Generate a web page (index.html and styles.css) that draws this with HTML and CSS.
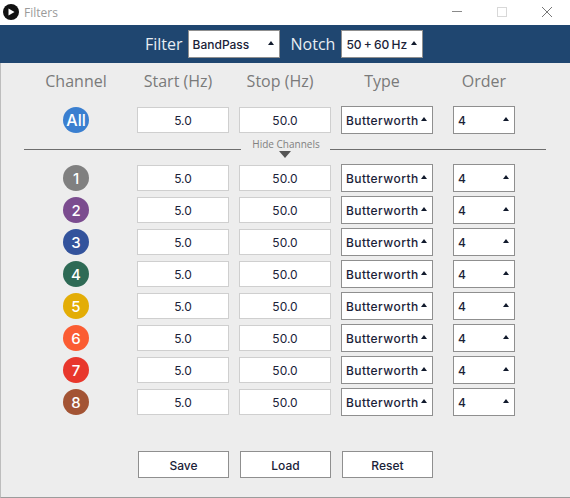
FILE: index.html
```html
<!DOCTYPE html>
<html lang="en">
<head>
    <meta charset="UTF-8">
    <title>Filters</title>
    <link rel="stylesheet" href="styles.css">
</head>
<body>
    <div class="titlebar">
        <svg class="app-icon" width="16" height="16" viewBox="0 0 16 16">
            <circle cx="8" cy="8" r="8" fill="#111"/>
            <path d="M5.5 4.5 L11.5 8 L5.5 11.5 Z" fill="#fff"/>
        </svg>
        <span class="title">Filters</span>
        <div class="win-buttons">
            <svg width="12" height="12" viewBox="0 0 12 12"><path d="M1 5.5 H11" stroke="#8a8a8a" fill="none"/></svg>
            <svg width="12" height="12" viewBox="0 0 12 12"><rect x="1.5" y="1.5" width="9" height="9" stroke="#d8d8d8" fill="none"/></svg>
            <svg width="12" height="12" viewBox="0 0 12 12"><path d="M1 1 L11 11 M11 1 L1 11" stroke="#777" fill="none"/></svg>
        </div>
    </div>

    <div class="topbar">
        <span class="top-label">Filter</span>
        <div class="select filter-select">BandPass<span class="caret"></span></div>
        <span class="top-label notch-label">Notch</span>
        <div class="select notch-select">50 + 60 Hz<span class="caret"></span></div>
    </div>

    <div class="content">
        <div class="row head">
            <div>Channel</div>
            <div>Start (Hz)</div>
            <div>Stop (Hz)</div>
            <div>Type</div>
            <div>Order</div>
        </div>

        <div class="row all-row">
            <div class="badge all">All</div>
            <div class="field">5.0</div>
            <div class="field">50.0</div>
            <div class="select">Butterworth<span class="caret"></span></div>
            <div class="select">4<span class="caret"></span></div>
        </div>

        <div class="divider">
            <div class="line"></div>
            <div class="toggle">
                <span class="toggle-text">Hide Channels</span>
                <span class="toggle-arrow"></span>
            </div>
            <div class="line"></div>
        </div>

        <div class="channels">
            <div class="row">
                <div class="badge c1">1</div>
                <div class="field">5.0</div>
                <div class="field">50.0</div>
                <div class="select">Butterworth<span class="caret"></span></div>
                <div class="select">4<span class="caret"></span></div>
            </div>
            <div class="row">
                <div class="badge c2">2</div>
                <div class="field">5.0</div>
                <div class="field">50.0</div>
                <div class="select">Butterworth<span class="caret"></span></div>
                <div class="select">4<span class="caret"></span></div>
            </div>
            <div class="row">
                <div class="badge c3">3</div>
                <div class="field">5.0</div>
                <div class="field">50.0</div>
                <div class="select">Butterworth<span class="caret"></span></div>
                <div class="select">4<span class="caret"></span></div>
            </div>
            <div class="row">
                <div class="badge c4">4</div>
                <div class="field">5.0</div>
                <div class="field">50.0</div>
                <div class="select">Butterworth<span class="caret"></span></div>
                <div class="select">4<span class="caret"></span></div>
            </div>
            <div class="row">
                <div class="badge c5">5</div>
                <div class="field">5.0</div>
                <div class="field">50.0</div>
                <div class="select">Butterworth<span class="caret"></span></div>
                <div class="select">4<span class="caret"></span></div>
            </div>
            <div class="row">
                <div class="badge c6">6</div>
                <div class="field">5.0</div>
                <div class="field">50.0</div>
                <div class="select">Butterworth<span class="caret"></span></div>
                <div class="select">4<span class="caret"></span></div>
            </div>
            <div class="row">
                <div class="badge c7">7</div>
                <div class="field">5.0</div>
                <div class="field">50.0</div>
                <div class="select">Butterworth<span class="caret"></span></div>
                <div class="select">4<span class="caret"></span></div>
            </div>
            <div class="row">
                <div class="badge c8">8</div>
                <div class="field">5.0</div>
                <div class="field">50.0</div>
                <div class="select">Butterworth<span class="caret"></span></div>
                <div class="select">4<span class="caret"></span></div>
            </div>
        </div>

        <div class="actions">
            <button class="btn">Save</button>
            <button class="btn">Load</button>
            <button class="btn">Reset</button>
        </div>
    </div>
</body>
</html>
```

FILE: styles.css
```css
* { box-sizing: border-box; }
html, body { margin: 0; padding: 0; }
body { width: 570px; height: 498px; overflow: hidden; background-color: #ededed; font-family: "Inter", "Open Sans", sans-serif; color: #1a2238; display: flex; flex-direction: column; }

.titlebar { height: 25px; background-color: #fff; display: flex; align-items: center; padding-left: 3px; }
.app-icon { margin-top: -1px; }
.title { margin-left: 5px; font-family: "Open Sans", sans-serif; font-size: 12px; color: #9a9a9a; }
.win-buttons { margin-left: auto; display: flex; gap: 33px; padding-right: 17px; margin-top: -1px; }

.topbar { height: 38px; background-color: #1f4670; display: flex; align-items: center; padding-left: 145px; }
.top-label { font-family: "Open Sans", sans-serif; font-size: 16px; color: #e8edf2; margin-right: 5px; }
.notch-label { margin-left: 11px; margin-right: 6px; }
.topbar .select { height: 28px; font-size: 12px; letter-spacing: 0; }
.filter-select { width: 92px; }
.notch-select { width: 82px; padding-right: 4px; word-spacing: -1px; }

.select { height: 28px; background-color: #fff; border: 1px solid #8f8f8f; display: flex; align-items: center; justify-content: space-between; padding: 1px 3px 0 4px; font-size: 12px; font-weight: 500; letter-spacing: 0.45px; color: #1a2238; white-space: nowrap; }
.caret { width: 0; height: 0; border-left: 3px solid transparent; border-right: 3px solid transparent; border-bottom: 4px solid #111a2c; margin-right: 2px; flex: none; }
.select .caret { margin-top: -3px; }

.content { flex: 1; border-left: 1px solid #bdbdbd; border-bottom: 1px solid #9c9c9c; }

.row { display: grid; grid-template-columns: 102px 92px 92px 92px 62px; column-gap: 10px; align-items: center; padding-left: 24px; }
.row > :last-child { margin-left: 10px; }
.row .select:last-child { width: 62px; }

.head { height: 36px; font-family: "Open Sans", sans-serif; font-size: 16px; color: #7a7a7a; text-align: center; }
.head > div:nth-child(2), .head > div:nth-child(3), .head > div:nth-child(4) { padding-right: 10px; white-space: nowrap; }
.head > div:last-child { width: 62px; }

.all-row { margin-top: 7px; height: 28px; }

.badge { width: 26px; height: 26px; border-radius: 50%; justify-self: center; color: #fff; font-size: 15px; font-weight: 500; display: flex; align-items: center; justify-content: center; }
.all { background-color: #3a7fd0; font-size: 16px; }
.c1 { background-color: #808080; }
.c2 { background-color: #7b4c8f; }
.c3 { background-color: #33539c; }
.c4 { background-color: #2e6a55; }
.c5 { background-color: #e3ad06; }
.c6 { background-color: #fb5c32; }
.c7 { background-color: #e8372c; }
.c8 { background-color: #a35434; }

.field { height: 26px; background-color: #fff; border: 1px solid #cfcfcf; padding-top: 1px; font-size: 12px; display: flex; align-items: center; justify-content: center; }

.divider { display: flex; align-items: flex-start; height: 30px; padding: 0 24px 0 23px; }
.line { flex: 1; height: 1px; background-color: #6e6e6e; margin-top: 15px; }
.toggle { width: 89px; display: flex; flex-direction: column; align-items: center; margin-top: 3px; }
.toggle-text { font-family: "Open Sans", sans-serif; font-size: 10px; line-height: 14px; color: #808080; white-space: nowrap; margin-left: 2px; }
.toggle-arrow { width: 0; height: 0; border-left: 6px solid transparent; border-right: 6px solid transparent; border-top: 7px solid #555; }

.channels { display: flex; flex-direction: column; row-gap: 4px; }
.channels .row { height: 28px; }

.actions { display: flex; gap: 11px; padding-left: 137px; margin-top: 35px; }
.btn { width: 91px; height: 27px; background-color: #fff; border: 1px solid #8f8f8f; font-family: inherit; font-size: 12px; font-weight: 500; color: #1a2238; padding: 1px 0 0; }
```
